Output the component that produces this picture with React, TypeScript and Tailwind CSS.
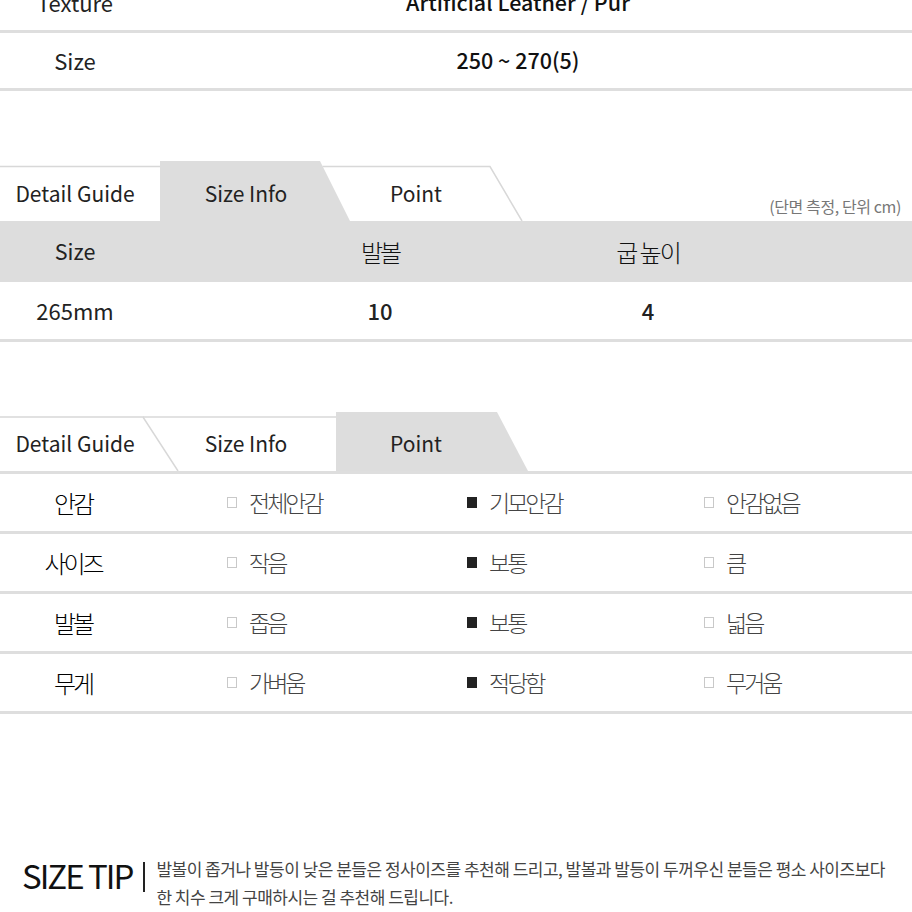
import type { ReactNode } from 'react'

type Level = 0 | 1 | 2

interface PointRow {
  label: string
  options: [string, string, string]
  checked: Level
}

const pointRows: PointRow[] = [
  { label: '안감', options: ['전체안감', '기모안감', '안감없음'], checked: 1 },
  { label: '사이즈', options: ['작음', '보통', '큼'], checked: 1 },
  { label: '발볼', options: ['좁음', '보통', '넓음'], checked: 1 },
  { label: '무게', options: ['가벼움', '적당함', '무거움'], checked: 1 },
]

const optionWidths = ['w-[240px]', 'w-[237px]', 'w-[200px]']

function InfoRow({ label, children, first }: { label: string; children: ReactNode; first?: boolean }) {
  return (
    <div className={`flex items-center h-[58px] border-b-[3px] border-[#dedede] ${first ? '-mt-[25px]' : ''}`}>
      <div className="w-[150px] shrink-0 text-center text-[22px] text-[#222]">{label}</div>
      <div className="w-[736px] shrink-0 text-center text-[21.5px] font-medium text-[#111]">{children}</div>
    </div>
  )
}

function TabLabels({ note, offset }: { note?: string; offset: string }) {
  return (
    <div className={`relative flex h-full items-center ${offset}`}>
      <div className="w-[150px] shrink-0 text-center text-[21px] text-[#222]">Detail Guide</div>
      <div className="w-[192px] shrink-0 text-center text-[21px] text-[#222]">Size Info</div>
      <div className="w-[148px] shrink-0 text-center text-[21px] text-[#222]">Point</div>
      {note && (
        <div className="ml-auto self-end pb-[3px] pr-[11px] text-[16px] tracking-[-0.4px] text-[#777]">{note}</div>
      )}
    </div>
  )
}

function Box({ filled }: { filled: boolean }) {
  return filled ? (
    <span className="inline-block w-[10px] h-[11px] shrink-0 bg-[#222]" />
  ) : (
    <span className="inline-block w-[10px] h-[11px] shrink-0 border border-[#c9c9c9] bg-white" />
  )
}

export default function App() {
  return (
    <div className="w-[912px] h-[912px] overflow-hidden bg-white font-['Noto_Sans_CJK_KR',sans-serif]">
      {/* spec rows */}
      <InfoRow label="Texture" first>
        Artificial Leather / Pur
      </InfoRow>
      <InfoRow label="Size">250 ~ 270(5)</InfoRow>

      {/* size info table */}
      <div className="mt-[70px]">
        <div className="relative h-[60px]">
          <svg className="absolute inset-0" width="912" height="60" viewBox="0 0 912 60">
            <line x1="0" y1="5.5" x2="160" y2="5.5" stroke="#d8d8d8" strokeWidth="1.5" />
            <polygon points="160,0 320,0 350,60 160,60" fill="#dddddd" />
            <polyline points="322.6,5.5 490,5.5 522,60" fill="none" stroke="#d8d8d8" strokeWidth="1.5" />
          </svg>
          <TabLabels note="(단면 측정, 단위 cm)" offset="pt-[6px]" />
        </div>
        <div className="flex items-center h-[61px] bg-[#dddddd] text-[#111]">
          <div className="w-[150px] shrink-0 text-center text-[21.5px] text-[#222]">Size</div>
          <div className="ml-[150px] w-[160px] shrink-0 text-center text-[24px] font-light tracking-[-3px]">발볼</div>
          <div className="ml-[128px] w-[120px] shrink-0 text-center text-[24px] font-light tracking-[-2px] whitespace-nowrap">굽 높이</div>
        </div>
        <div className="flex items-center h-[60px] border-b-[3px] border-[#dedede] text-[22px] text-[#222]">
          <div className="w-[150px] shrink-0 text-center">265mm</div>
          <div className="ml-[150px] w-[160px] shrink-0 text-center font-medium">10</div>
          <div className="ml-[128px] w-[120px] shrink-0 text-center font-medium">4</div>
        </div>
      </div>

      {/* point table */}
      <div className="mt-[70px]">
        <div className="border-b-[3px] border-[#dedede]">
          <div className="relative h-[59px]">
            <svg className="absolute inset-0" width="912" height="59" viewBox="0 0 912 59">
              <polyline points="0,5 143,5 178,59" fill="none" stroke="#d8d8d8" strokeWidth="1.5" />
              <line x1="143" y1="5" x2="336" y2="5" stroke="#d8d8d8" strokeWidth="1.5" />
              <polygon points="336,0 497,0 528,59 336,59" fill="#dddddd" />
            </svg>
            <TabLabels offset="pt-[5px]" />
          </div>
        </div>
        {pointRows.map((row) => (
          <div key={row.label} className="flex items-center h-[60px] border-b-[3px] border-[#dedede]">
            <div className="w-[150px] shrink-0 pr-[4px] text-center text-[24px] font-light tracking-[-3px] text-[#000]">
              {row.label}
            </div>
            <div className="w-[77px] shrink-0" />
            {row.options.map((opt, i) => (
              <div key={opt + i} className={`${optionWidths[i]} shrink-0 flex items-center gap-[12px]`}>
                <Box filled={row.checked === i} />
                <span className="text-[23px] font-light tracking-[-3px] text-[#444]">{opt}</span>
              </div>
            ))}
          </div>
        ))}
      </div>

      {/* size tip */}
      <div className="mt-[141px] flex items-start">
        <div className="pl-[22px] text-[33px] leading-[40px] tracking-[-2px] text-[#111]">SIZE TIP</div>
        <div className="ml-[11px] mt-[7px] w-[2px] h-[30px] shrink-0 bg-[#222]" />
        <p className="ml-[11px] text-[17px] leading-[28px] tracking-[-0.5px] text-[#444] whitespace-nowrap">
          발볼이 좁거나 발등이 낮은 분들은 정사이즈를 추천해 드리고, 발볼과 발등이 두꺼우신 분들은 평소 사이즈보다
          <br />한 치수 크게 구매하시는 걸 추천해 드립니다.
        </p>
      </div>
    </div>
  )
}
